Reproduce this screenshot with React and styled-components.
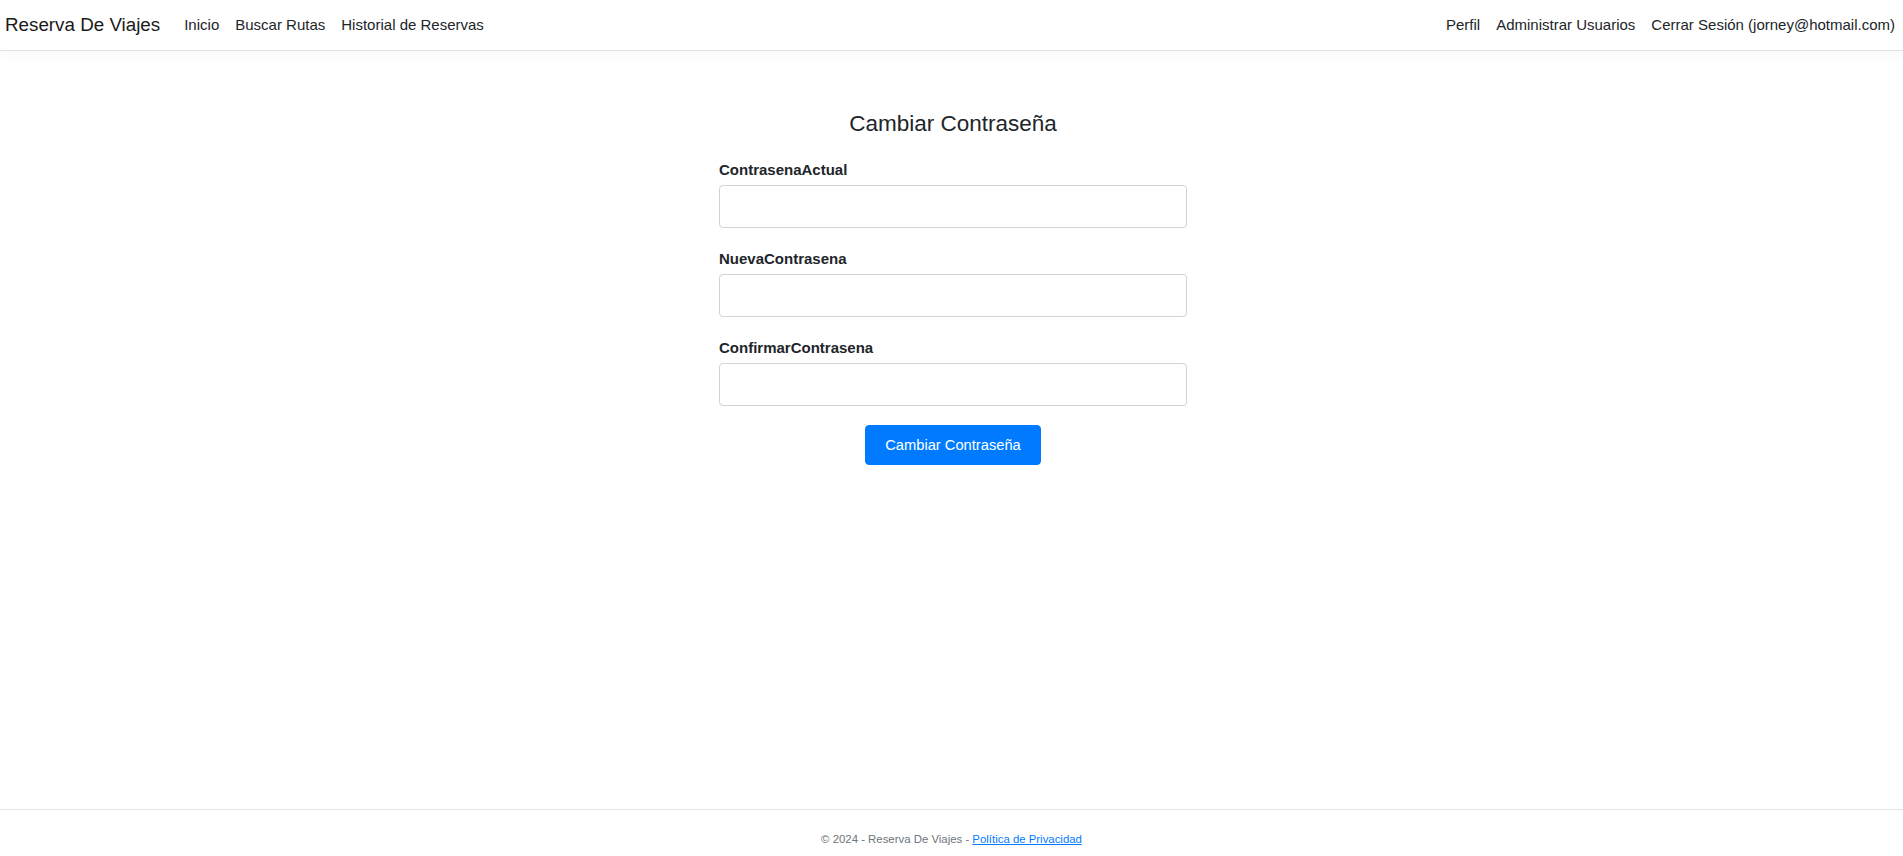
import React from "react";
import styled, { createGlobalStyle } from "styled-components";

const GlobalStyle = createGlobalStyle`
  * {
    box-sizing: border-box;
  }
  html, body {
    margin: 0;
    height: 100%;
    overflow: hidden;
  }
  body {
    font-family: "Liberation Sans", Arial, sans-serif;
    color: #212529;
    background: #fff;
  }
`;

const Page = styled.div`
  height: 856px;
  display: flex;
  flex-direction: column;
`;

const Navbar = styled.nav`
  height: 51px;
  display: flex;
  align-items: center;
  padding: 0 0 0 5px;
  border-bottom: 1px solid #e2e3e5;
  box-shadow: 0 4px 12px rgba(0, 0, 0, 0.03);
`;

const Brand = styled.a`
  font-size: 18.8px;
  color: #1a1a1a;
  text-decoration: none;
  margin-right: 16px;
  line-height: 1.5;
`;

const NavList = styled.div`
  display: flex;
  align-items: center;
  margin-left: ${({ right }) => (right ? "auto" : "0")};
`;

const NavLink = styled.a`
  font-size: 15px;
  color: #212529;
  text-decoration: none;
  padding: 0 8px;
  line-height: 1.5;
  white-space: nowrap;
`;

const Main = styled.main`
  flex: 1;
  display: flex;
  justify-content: center;
  padding-top: 59px;
`;

const Form = styled.form`
  width: 468px;
  display: flex;
  flex-direction: column;
  margin-left: 3px;
`;

const Title = styled.h2`
  margin: 0 0 21px;
  font-size: 22.5px;
  font-weight: 400;
  line-height: 27px;
  text-align: center;
  color: #212529;
`;

const Group = styled.div`
  display: flex;
  flex-direction: column;
  margin-bottom: 19px;
`;

const Label = styled.label`
  font-size: 15px;
  font-weight: 700;
  line-height: 23px;
  margin-bottom: 4px;
  color: #212529;
`;

const Input = styled.input`
  height: 43px;
  border: 1px solid #ced4da;
  border-radius: 4px;
  padding: 6px 12px;
  font-size: 15px;
  font-family: inherit;
  &:focus {
    outline: none;
  }
`;

const Button = styled.button`
  align-self: center;
  margin-left: 0;
  height: 40px;
  padding: 0 19px;
  background: #007bff;
  color: #fff;
  border: 1px solid #007bff;
  border-radius: 4px;
  font-family: inherit;
  font-size: 14.7px;
  cursor: pointer;
`;

const Footer = styled.footer`
  height: 47px;
  border-top: 1px solid #e2e3e5;
  text-align: center;
  font-size: 11.4px;
  line-height: 58px;
  color: #6c757d;
  white-space: nowrap;
  overflow: hidden;
  a {
    color: #007bff;
    text-decoration: underline;
  }
`;

const fields = ["ContrasenaActual", "NuevaContrasena", "ConfirmarContrasena"];

export default function App() {
  return (
    <Page>
      <GlobalStyle />
      <Navbar>
        <Brand href="#">Reserva De Viajes</Brand>
        <NavList>
          <NavLink href="#">Inicio</NavLink>
          <NavLink href="#">Buscar Rutas</NavLink>
          <NavLink href="#">Historial de Reservas</NavLink>
        </NavList>
        <NavList right>
          <NavLink href="#">Perfil</NavLink>
          <NavLink href="#">Administrar Usuarios</NavLink>
          <NavLink href="#">Cerrar Sesión (jorney@hotmail.com)</NavLink>
        </NavList>
      </Navbar>
      <Main>
        <Form onSubmit={e => e.preventDefault()}>
          <Title>Cambiar Contraseña</Title>
          {fields.map(name => (
            <Group key={name}>
              <Label htmlFor={name}>{name}</Label>
              <Input id={name} type="password" />
            </Group>
          ))}
          <Button type="submit">Cambiar Contraseña</Button>
        </Form>
      </Main>
      <Footer>
        © 2024 - Reserva De Viajes - <a href="#">Política de Privacidad</a>
      </Footer>
    </Page>
  );
}
